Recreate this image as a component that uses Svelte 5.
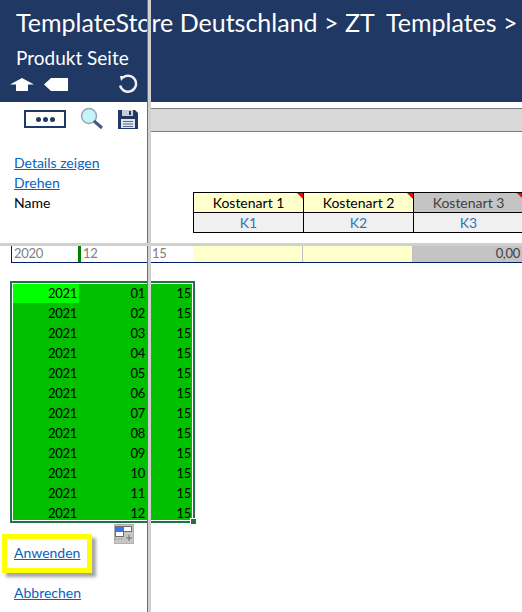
<script>
	const months = ['01', '02', '03', '04', '05', '06', '07', '08', '09', '10', '11', '12'];
	const kinds = [
		{ name: 'Kostenart 1', code: 'K1', tone: 'yellow' },
		{ name: 'Kostenart 2', code: 'K2', tone: 'yellow' },
		{ name: 'Kostenart 3', code: 'K3', tone: 'grey' }
	];
</script>

<div class="page">
	<header class="banner">
		<h1>TemplateStore Deutschland &gt; ZT&nbsp; Templates &gt;</h1>
		<h2>Produkt Seite</h2>
		<div class="nav">
			<svg width="24" height="13" viewBox="0 0 24 13"><path d="M0 6.500 12 0 24 6.500H18V13H6V6.500Z" fill="#fff" /></svg>
			<svg class="back" width="24" height="13" viewBox="0 0 24 13"><path d="M0 6.500 7 0H24V13H7Z" fill="#fff" /></svg>
			<svg class="reload" width="20" height="20" viewBox="0 0 20 20"><path d="M5 3.500A8 8 0 1 1 2.200 11.500" fill="none" stroke="#f0f0f0" stroke-width="2.500" /><path d="M2 2 7.500 2 3 7Z" fill="#f0f0f0" /></svg>
		</div>
	</header>

	<div class="tools">
		<div class="tool-icons">
			<div class="dots"><i></i><i></i><i></i></div>
			<svg class="lens" width="24" height="24" viewBox="0 0 24 24">
				<circle cx="9" cy="9" r="7.500" fill="#c4f4f8" stroke="#8fa9b8" stroke-width="1.500" />
				<path d="M14 14 22 21" stroke="#44597a" stroke-width="3" />
			</svg>
			<svg class="disk" width="20" height="20" viewBox="0 0 20 20">
				<path d="M0 1H17L20 4V20H0Z" fill="#1f3864" />
				<rect x="4" y="1" width="11" height="6" fill="#c9ced8" />
				<rect x="11" y="2" width="2" height="4" fill="#1f3864" />
				<rect x="3" y="10" width="14" height="9" fill="#dfe4ee" />
				<path d="M5 12.500H15M5 15H15M5 17.500H15" stroke="#5a6b8c" />
			</svg>
		</div>
		<div class="band"></div>
	</div>

	<div class="heads">
		<div class="links">
			<a href="#details">Details zeigen</a>
			<a href="#drehen">Drehen</a>
			<span>Name</span>
		</div>
		<div class="kinds">
			{#each kinds as kind}
				<div class="kind {kind.tone}">{kind.name}</div>
			{/each}
			{#each kinds as kind}
				<div class="code">{kind.code}</div>
			{/each}
		</div>
	</div>

	<div class="source">
		<span class="c-year">2020</span>
		<span class="c-month">12</span>
		<span class="c-day">15</span>
		<span class="c-val"></span>
		<span class="c-val"></span>
		<span class="c-val total">0,00</span>
	</div>

	<div class="selection">
		{#each months as month, i}
			<div class="row">
				<span class="year" class:active={i === 0}>2021</span>
				<span class="month">{month}</span>
				<span class="day">15</span>
			</div>
		{/each}
		<b class="handle"></b>
		<div class="paste">
			<svg width="20" height="18" viewBox="0 0 20 18">
				<rect x="1.500" y="2.500" width="8" height="5" fill="#3a78f2" stroke="#6d6d6d" />
				<rect x="9.500" y="2.500" width="8" height="5" fill="#fff" stroke="#6d6d6d" />
				<rect x="1.500" y="7.500" width="8" height="5" fill="#fff" stroke="#6d6d6d" />
				<path d="M1 15H10" stroke="#6d6d6d" stroke-dasharray="1 2" />
				<path d="M15 11V17M12 14H18" stroke="#6d6d6d" />
			</svg>
		</div>
	</div>

	<div class="actions">
		<div class="apply"><a href="#anwenden">Anwenden</a></div>
		<a href="#abbrechen">Abbrechen</a>
	</div>

	<div class="freeze-v"></div>
	<div class="freeze-h"></div>
</div>

<style>
	:global(body) {
		margin: 0;
		background: #fff;
	}

	.page {
		position: relative;
		width: 522px;
		height: 612px;
		overflow: hidden;
		font-family: Lato, "Open Sans", sans-serif;
		font-size: 14px;
		color: #000;
	}

	a {
		color: #0563c1;
		text-decoration: underline;
	}

	.banner {
		box-sizing: border-box;
		height: 102px;
		padding: 6px 0 0 16px;
		background: #1f3864;
		color: #fff;
		white-space: nowrap;
	}

	.banner h1 {
		margin: 0;
		font-size: 25px;
		font-weight: 400;
		line-height: 32px;
	}

	.banner h2 {
		margin: 8px 0 0;
		font-size: 19px;
		font-weight: 400;
		line-height: 24px;
	}

	.nav {
		display: flex;
		align-items: center;
		margin: 0 0 0 -6px;
		padding-top: 4px;
	}

	.back {
		margin-left: 10px;
	}

	.reload {
		margin-left: 50px;
	}

	.tools {
		display: flex;
		height: 34px;
	}

	.tool-icons {
		box-sizing: border-box;
		width: 148px;
		display: flex;
		align-items: center;
		padding-left: 24px;
	}

	.dots {
		box-sizing: border-box;
		width: 42px;
		height: 18px;
		display: flex;
		align-items: center;
		justify-content: center;
		gap: 2px;
		border: 2px solid #1f3864;
	}

	.dots i {
		width: 5px;
		height: 5px;
		border-radius: 50%;
		background: #1f3864;
	}

	.lens {
		margin-left: 14px;
	}

	.disk {
		margin-left: 14px;
	}

	.band {
		flex: 1;
		height: 22px;
		margin-top: 6px;
		background: #d9d9d9;
		border-top: 1px solid #7f7f7f;
		border-bottom: 1px solid #7f7f7f;
	}

	.heads {
		display: flex;
		height: 107px;
	}

	.links {
		box-sizing: border-box;
		flex: 0 0 193px;
		display: flex;
		flex-direction: column;
		align-items: flex-start;
		padding: 17px 0 0 14px;
		line-height: 20px;
	}

	.kinds {
		flex: none;
		display: grid;
		grid-template-columns: 110px 110px 110px;
		grid-auto-rows: 20px;
		margin-top: 56px;
		height: 40px;
		border-top: 1px solid #000;
		border-left: 1px solid #000;
	}

	.kind,
	.code {
		box-sizing: border-box;
		position: relative;
		border-right: 1px solid #000;
		border-bottom: 1px solid #000;
		text-align: center;
		line-height: 20px;
	}

	.kind.yellow {
		background: #ffffcc;
	}

	.kind.grey {
		background: #c4c4c4;
		color: #404040;
	}

	.kind::after {
		content: '';
		position: absolute;
		top: 0;
		right: 0;
		border-top: 6px solid #f00;
		border-left: 6px solid transparent;
	}

	.code {
		background: #f0f0f0;
		color: #2e75b6;
	}

	.source {
		box-sizing: border-box;
		display: flex;
		height: 20px;
		margin-left: 11px;
		font-size: 13px;
		letter-spacing: -0.3px;
		line-height: 20px;
		color: #808080;
		border-bottom: 1px solid #002060;
		border-left: 1px solid #002060;
	}

	.source span {
		box-sizing: border-box;
		padding-left: 2px;
	}

	.c-year {
		width: 69px;
		border-right: 3px solid #008000;
	}

	.c-month {
		width: 69px;
	}

	.c-day {
		width: 43px;
	}

	.c-val {
		width: 110px;
		background: #ffffcc;
		border-right: 1px solid #bfbfbf;
	}

	.c-val.total {
		flex: 1;
		padding-right: 2px;
		background: #c4c4c4;
		color: #404040;
		text-align: right;
		border: 0;
	}

	.selection {
		position: relative;
		box-sizing: border-box;
		width: 185px;
		height: 242px;
		margin: 18px 0 0 10px;
		background: #00c000;
		border: 2px solid #217346;
		outline: 1px solid #fff;
		outline-offset: -3px;
		font-size: 13px;
		letter-spacing: -0.3px;
		line-height: 20px;
	}

	.row {
		display: grid;
		grid-template-columns: 67px 68px 46px;
		height: 20px;
		text-align: right;
	}

	.row span {
		padding-right: 2px;
	}

	.row span.active {
		background: #00ff00;
	}

	.handle {
		position: absolute;
		right: -4px;
		bottom: -4px;
		width: 5px;
		height: 5px;
		background: #217346;
		border: 1px solid #fff;
	}

	.paste {
		position: absolute;
		left: 102px;
		top: 241px;
		box-sizing: border-box;
		width: 20px;
		height: 20px;
		background: #c6c6c6;
		border: 1px solid #b0b0b0;
	}

	.paste svg {
		display: block;
		margin: -1px;
	}

	.actions {
		display: flex;
		flex-direction: column;
		align-items: flex-start;
		margin-left: 14px;
	}

	.apply {
		box-sizing: border-box;
		width: 90px;
		height: 39px;
		margin: 11px 0 0 -12px;
		padding: 5px 0 0 7px;
		border: 5px solid #ffff00;
		box-shadow: 4px 4px 3px #a6a6a6;
		line-height: 18px;
	}

	.actions > a {
		margin-top: 10px;
		line-height: 20px;
	}

	.freeze-v {
		position: absolute;
		top: 0;
		bottom: 0;
		left: 147px;
		width: 4px;
		background: #d0d0d0;
		border-left: 1px solid #707070;
		box-sizing: border-box;
	}

	.freeze-h {
		position: absolute;
		left: 0;
		right: 0;
		top: 243px;
		height: 3px;
		background: #d0d0d0;
	}
</style>
